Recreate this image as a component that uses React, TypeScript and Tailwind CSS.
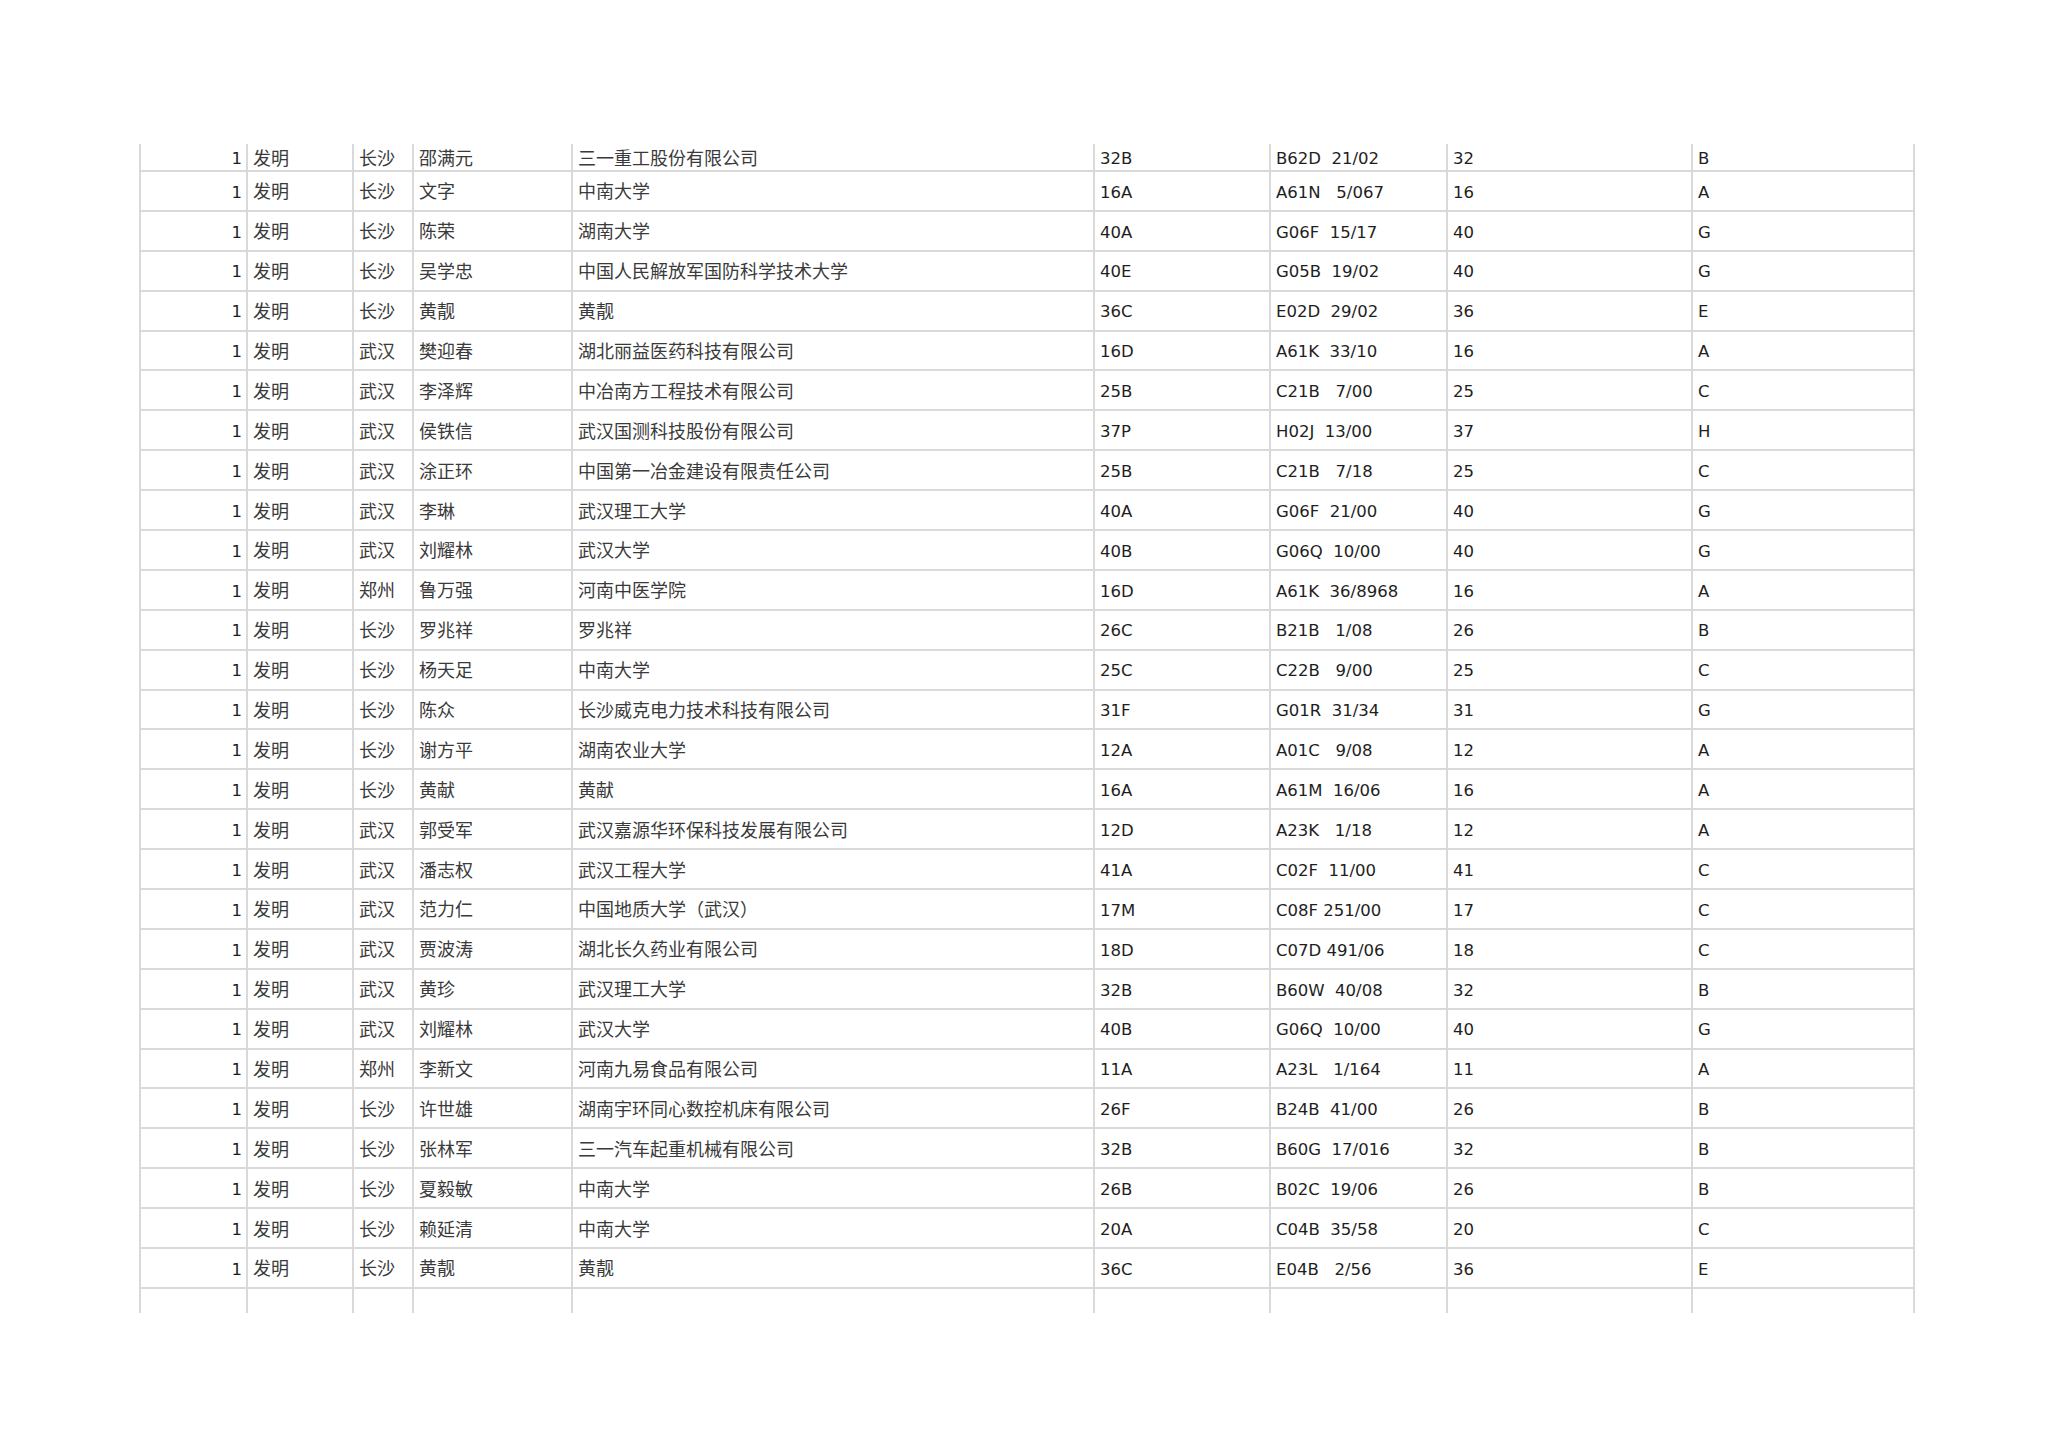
import React from "react";

type Row = [string, string, string, string, string, string, string];

const rows: Row[] = [
  ["长沙", "邵满元", "三一重工股份有限公司", "32B", "B62D  21/02", "32", "B"],
  ["长沙", "文字", "中南大学", "16A", "A61N   5/067", "16", "A"],
  ["长沙", "陈荣", "湖南大学", "40A", "G06F  15/17", "40", "G"],
  ["长沙", "吴学忠", "中国人民解放军国防科学技术大学", "40E", "G05B  19/02", "40", "G"],
  ["长沙", "黄靓", "黄靓", "36C", "E02D  29/02", "36", "E"],
  ["武汉", "樊迎春", "湖北丽益医药科技有限公司", "16D", "A61K  33/10", "16", "A"],
  ["武汉", "李泽辉", "中冶南方工程技术有限公司", "25B", "C21B   7/00", "25", "C"],
  ["武汉", "侯铁信", "武汉国测科技股份有限公司", "37P", "H02J  13/00", "37", "H"],
  ["武汉", "涂正环", "中国第一冶金建设有限责任公司", "25B", "C21B   7/18", "25", "C"],
  ["武汉", "李琳", "武汉理工大学", "40A", "G06F  21/00", "40", "G"],
  ["武汉", "刘耀林", "武汉大学", "40B", "G06Q  10/00", "40", "G"],
  ["郑州", "鲁万强", "河南中医学院", "16D", "A61K  36/8968", "16", "A"],
  ["长沙", "罗兆祥", "罗兆祥", "26C", "B21B   1/08", "26", "B"],
  ["长沙", "杨天足", "中南大学", "25C", "C22B   9/00", "25", "C"],
  ["长沙", "陈众", "长沙威克电力技术科技有限公司", "31F", "G01R  31/34", "31", "G"],
  ["长沙", "谢方平", "湖南农业大学", "12A", "A01C   9/08", "12", "A"],
  ["长沙", "黄献", "黄献", "16A", "A61M  16/06", "16", "A"],
  ["武汉", "郭受军", "武汉嘉源华环保科技发展有限公司", "12D", "A23K   1/18", "12", "A"],
  ["武汉", "潘志权", "武汉工程大学", "41A", "C02F  11/00", "41", "C"],
  ["武汉", "范力仁", "中国地质大学（武汉）", "17M", "C08F 251/00", "17", "C"],
  ["武汉", "贾波涛", "湖北长久药业有限公司", "18D", "C07D 491/06", "18", "C"],
  ["武汉", "黄珍", "武汉理工大学", "32B", "B60W  40/08", "32", "B"],
  ["武汉", "刘耀林", "武汉大学", "40B", "G06Q  10/00", "40", "G"],
  ["郑州", "李新文", "河南九易食品有限公司", "11A", "A23L   1/164", "11", "A"],
  ["长沙", "许世雄", "湖南宇环同心数控机床有限公司", "26F", "B24B  41/00", "26", "B"],
  ["长沙", "张林军", "三一汽车起重机械有限公司", "32B", "B60G  17/016", "32", "B"],
  ["长沙", "夏毅敏", "中南大学", "26B", "B02C  19/06", "26", "B"],
  ["长沙", "赖延清", "中南大学", "20A", "C04B  35/58", "20", "C"],
  ["长沙", "黄靓", "黄靓", "36C", "E04B   2/56", "36", "E"],
];

const grid =
  "grid grid-cols-[107px_106px_60px_159px_522px_176px_177px_245px_224px]";
const cell = "flex items-center border-l-2 border-[#d9d9d9] overflow-hidden";
const cn =
  "pl-[5px] pb-[1px] text-[18px] leading-none text-[#3a3a3a] font-['Noto_Sans_CJK_SC',sans-serif]";
const lat =
  "pl-[5px] pt-[4px] text-[16.5px] leading-none text-[#1e1e1e] font-['DejaVu_Sans','Noto_Sans_CJK_SC',sans-serif]";

function DataRow({ r, first }: { r: Row; first?: boolean }) {
  const h = first ? "h-[28px]" : "h-[39.9px]";
  return (
    <div className={`${grid} ${h} border-b-2 border-[#d9d9d9]`}>
      <div className={`${cell} justify-end pr-[4px] pt-[4px] text-[16.5px] leading-none text-[#1e1e1e] font-['DejaVu_Sans',sans-serif]`}>
        1
      </div>
      <div className={`${cell} ${cn}`}>发明</div>
      <div className={`${cell} ${cn}`}>{r[0]}</div>
      <div className={`${cell} ${cn}`}>{r[1]}</div>
      <div className={`${cell} ${cn}`}>{r[2]}</div>
      <div className={`${cell} ${lat}`}>{r[3]}</div>
      <div className={`${cell} ${lat}`}>
        <span className="whitespace-pre">{r[4]}</span>
      </div>
      <div className={`${cell} ${lat}`}>{r[5]}</div>
      <div className={`${cell} ${lat} border-r-2`}>{r[6]}</div>
    </div>
  );
}

export default function App() {
  return (
    <div className="w-[2048px] h-[1447px] bg-white pt-[144px] pl-[139px]">
      <div className="w-[1776px]">
        {rows.map((r, i) => (
          <DataRow key={i} r={r} first={i === 0} />
        ))}
        <div className={`${grid} h-[24px]`}>
          <div className={cell} />
          <div className={cell} />
          <div className={cell} />
          <div className={cell} />
          <div className={cell} />
          <div className={cell} />
          <div className={cell} />
          <div className={cell} />
          <div className={`${cell} border-r-2`} />
        </div>
      </div>
    </div>
  );
}
